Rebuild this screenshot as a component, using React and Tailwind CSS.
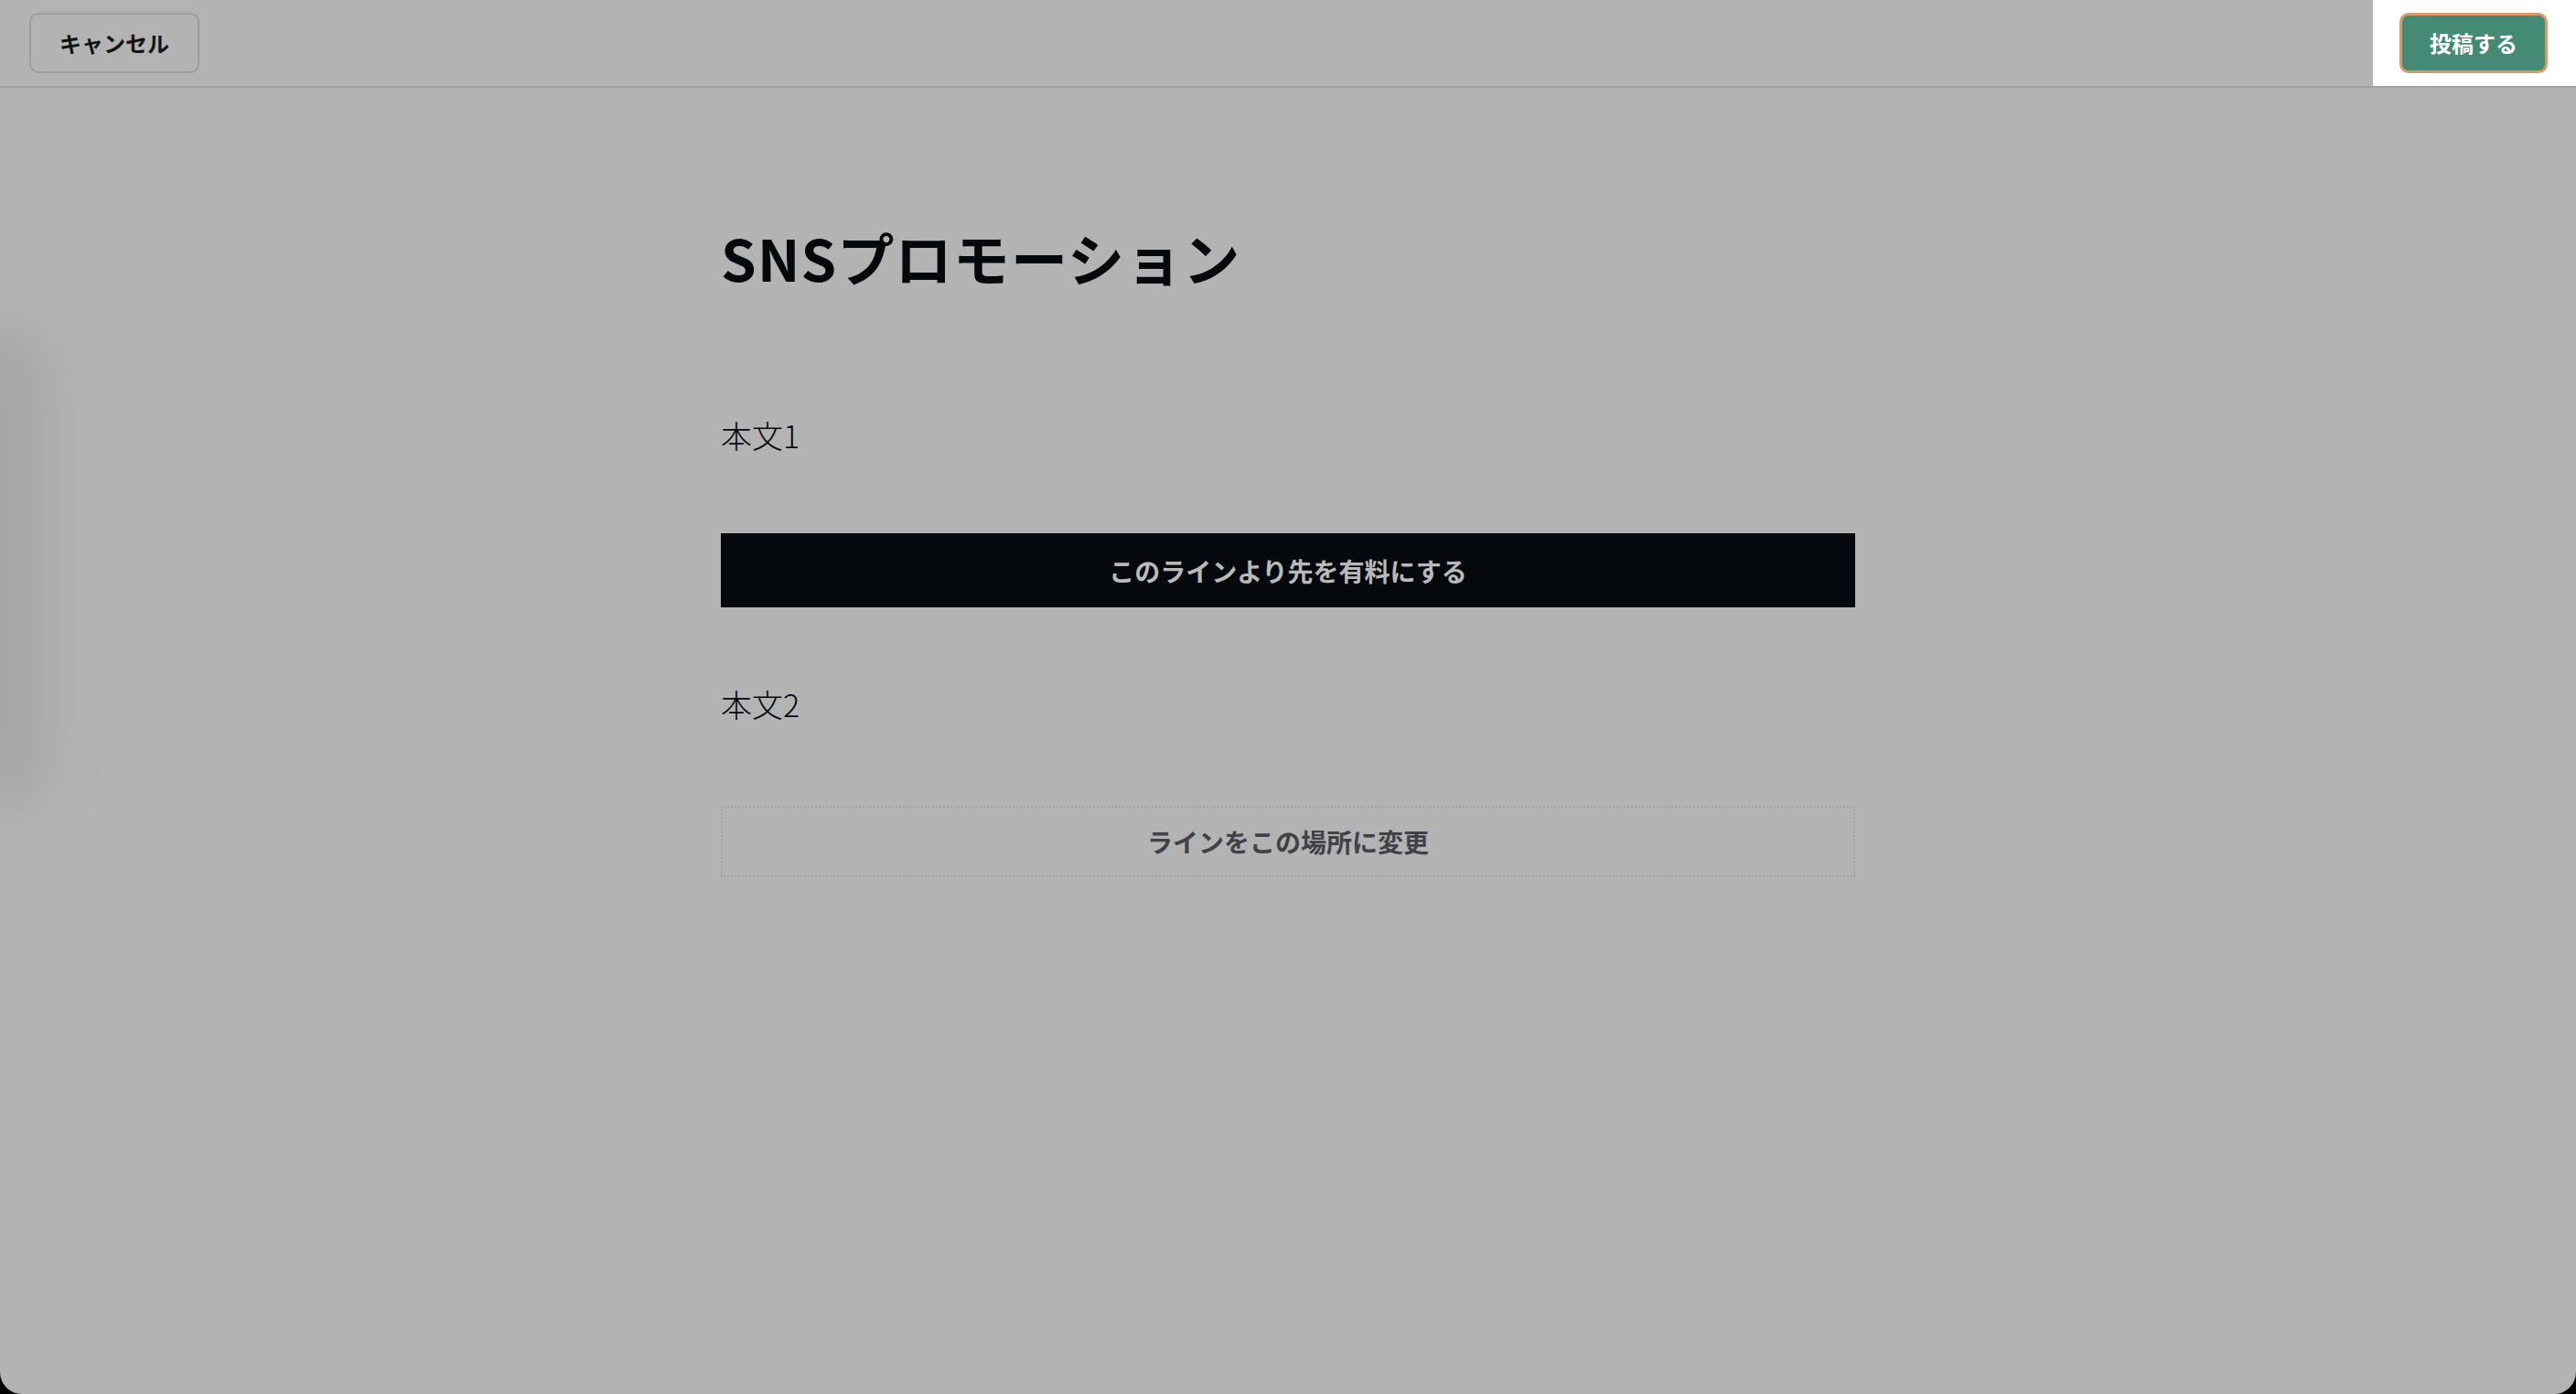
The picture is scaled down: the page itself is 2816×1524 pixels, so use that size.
import React from "react";

const font = "font-['Noto_Sans_CJK_JP','Noto_Sans',sans-serif]";

const Header = () => {
  return (
    <header className="flex h-[96px] items-center justify-between border-b-2 border-[#a0a0a0] pl-[32px]">
      <button className="h-[66px] rounded-[10px] border-2 border-[#9d9d9d] px-[31px] text-[24px] font-bold text-[#111417]">
        キャンセル
      </button>

      {/* spotlighted area round the post button */}
      <div className="flex h-full items-center bg-white pl-[29px] pr-[31px]">
        <button className="h-[66px] rounded-[10px] border-[3px] border-[#dc9866] bg-[#458a74] px-[30px] text-[24px] font-bold text-white">
          投稿する
        </button>
      </div>
    </header>
  );
};

const App = () => {
  return (
    <div className={`min-h-screen bg-black ${font}`}>
      <div className="relative flex h-[1524px] flex-col overflow-hidden rounded-b-[24px] bg-[#b3b3b3]">
        <Header />

        {/* faint shadow of a panel on the left edge */}
        <div className="pointer-events-none absolute left-[-40px] top-[360px] h-[520px] w-[90px] rounded-full bg-[#9c9c9c] opacity-60 blur-[28px]" />

        <main className="mx-auto w-[1240px] pt-[140px]">
          <h1 className="text-[62px] font-bold leading-[90px] tracking-[1.2px] text-[#06090c]">
            SNSプロモーション
          </h1>

          <p className="mt-[126px] text-[34px] font-light leading-[48px] text-[#06090c]">
            本文1
          </p>

          <div className="mt-[83px] flex h-[81px] items-center justify-center bg-[#05090d] text-[28px] font-bold text-[#b9b9b9]">
            このラインより先を有料にする
          </div>

          <p className="mt-[82px] text-[34px] font-light leading-[48px] text-[#06090c]">
            本文2
          </p>

          <div className="mt-[87px] flex h-[78px] items-center justify-center border-2 border-dotted border-[#a3a3a3] text-[28px] font-bold text-[#3f4246]">
            ラインをこの場所に変更
          </div>
        </main>
      </div>
    </div>
  );
};

export default App;
